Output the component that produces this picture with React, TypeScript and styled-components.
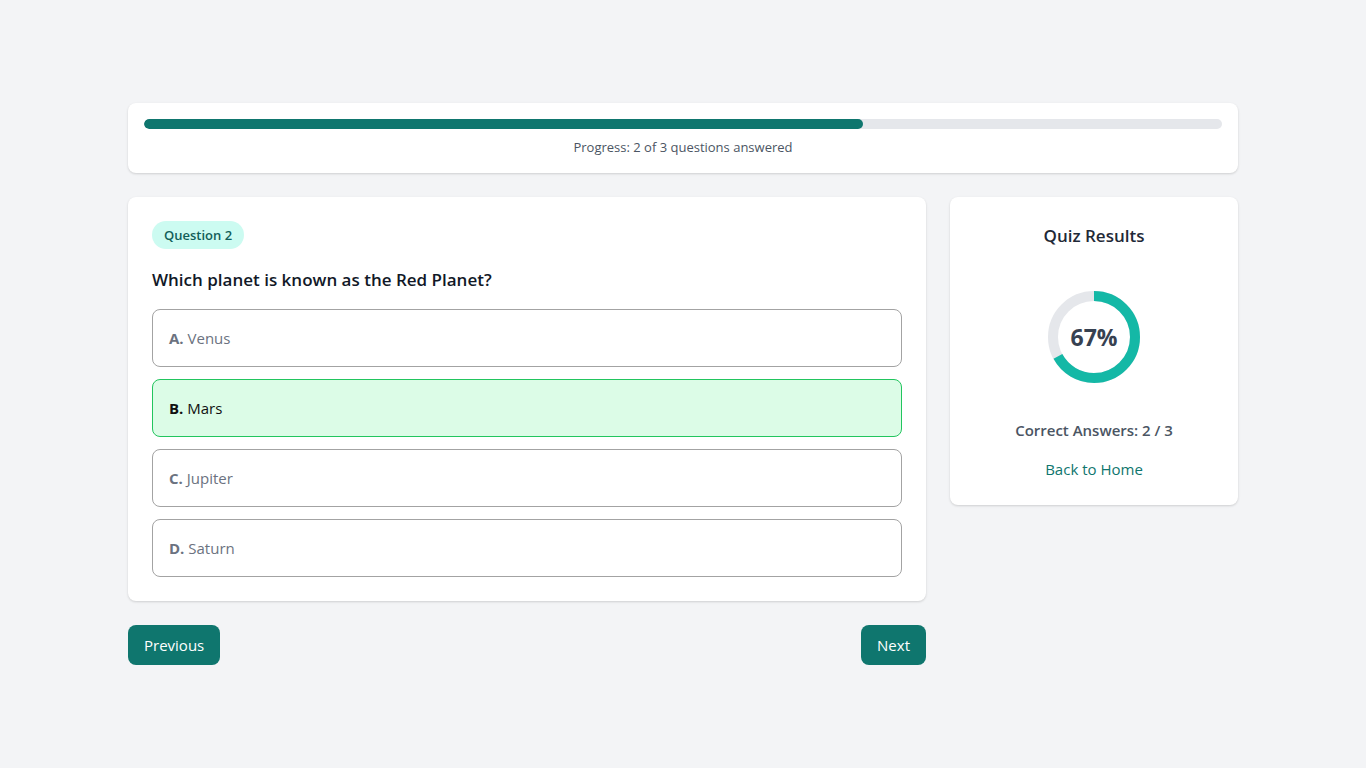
import React from "react";
import styled, { createGlobalStyle } from "styled-components";

const Global = createGlobalStyle`
  * { box-sizing: border-box; }
  html, body { margin: 0; padding: 0; background: #f3f4f6; }
  body { font-family: "Open Sans", "Noto Sans", sans-serif; color: #111827; }
`;

const Page = styled.div`
  min-height: 100vh;
  display: flex;
  align-items: center;
  justify-content: center;
`;

const Wrap = styled.div`
  width: 1110px;
  display: flex;
  flex-direction: column;
  gap: 24px;
`;

const Card = styled.div`
  background: #fff;
  border-radius: 8px;
  box-shadow: 0 1px 3px rgba(0, 0, 0, 0.1), 0 1px 2px rgba(0, 0, 0, 0.06);
`;

const ProgressCard = styled(Card)`
  padding: 16px 16px 17px;
  display: flex;
  flex-direction: column;
  gap: 9px;
`;

const Track = styled.div`
  height: 10px;
  border-radius: 5px;
  background: #e5e7eb;
  overflow: hidden;
`;

const Fill = styled.div`
  height: 100%;
  border-radius: 5px;
  background: #0f766e;
`;

const ProgressText = styled.div`
  text-align: center;
  font-size: 13px;
  line-height: 18px;
  color: #4b5563;
`;

const Row = styled.div`
  display: grid;
  grid-template-columns: 798px 1fr;
  gap: 24px;
  align-items: start;
`;

const Left = styled.div`
  display: flex;
  flex-direction: column;
  gap: 24px;
`;

const QuestionCard = styled(Card)`
  padding: 24px;
  display: flex;
  flex-direction: column;
`;

const Badge = styled.span`
  align-self: flex-start;
  height: 28px;
  padding: 0 12px;
  border-radius: 14px;
  background: #ccfbf1;
  color: #115e59;
  font-size: 13px;
  font-weight: 600;
  display: inline-flex;
  align-items: center;
`;

const QuestionTitle = styled.h2`
  margin: 19px 0 17px;
  font-size: 17px;
  line-height: 24px;
  font-weight: 600;
  color: #111827;
`;

const Options = styled.div`
  display: flex;
  flex-direction: column;
  gap: 12px;
`;

const Option = styled.button<{ $selected?: boolean }>`
  height: 58px;
  width: 100%;
  text-align: left;
  padding: 0 16px;
  border-radius: 8px;
  border: 1px solid ${(p) => (p.$selected ? "#22c55e" : "#a3a3a3")};
  background: ${(p) => (p.$selected ? "#dcfce7" : "#fff")};
  color: ${(p) => (p.$selected ? "#111111" : "#6b7280")};
  font-family: inherit;
  font-size: 15px;
  cursor: pointer;
`;

const Letter = styled.b`
  font-weight: 700;
`;

const Nav = styled.div`
  display: flex;
  justify-content: space-between;
`;

const NavButton = styled.button`
  height: 40px;
  padding: 0 16px;
  border: none;
  border-radius: 8px;
  background: #0f766e;
  color: #fff;
  font-family: inherit;
  font-size: 15px;
  cursor: pointer;
`;

const ResultsCard = styled(Card)`
  padding: 24px 24px 25px;
  display: flex;
  flex-direction: column;
  align-items: center;
`;

const ResultsTitle = styled.h3`
  margin: 2px 0 0;
  font-size: 17px;
  line-height: 26px;
  font-weight: 600;
  color: #1f2937;
`;

const Donut = styled.div`
  position: relative;
  width: 94px;
  height: 94px;
  margin-top: 41px;
`;

const DonutLabel = styled.span`
  position: absolute;
  inset: 0;
  display: flex;
  align-items: center;
  justify-content: center;
  font-size: 23px;
  font-weight: 700;
  color: #374151;
`;

const Correct = styled.div`
  margin-top: 35px;
  font-size: 15px;
  line-height: 22px;
  font-weight: 600;
  color: #4b5563;
`;

const HomeLink = styled.a`
  margin-top: 17px;
  font-size: 15px;
  line-height: 22px;
  color: #0f766e;
  text-decoration: none;
`;

const options = [
  { l: "A.", t: "Venus" },
  { l: "B.", t: "Mars", sel: true },
  { l: "C.", t: "Jupiter" },
  { l: "D.", t: "Saturn" },
];

export default function App() {
  const pct = 2 / 3;
  const r = 41;
  const c = 2 * Math.PI * r;
  return (
    <>
      <Global />
      <Page>
        <Wrap>
          <ProgressCard>
            <Track>
              <Fill style={{ width: `${pct * 100}%` }} />
            </Track>
            <ProgressText>Progress: 2 of 3 questions answered</ProgressText>
          </ProgressCard>
          <Row>
            <Left>
              <QuestionCard>
                <Badge>Question 2</Badge>
                <QuestionTitle>Which planet is known as the Red Planet?</QuestionTitle>
                <Options>
                  {options.map((o) => (
                    <Option key={o.l} $selected={o.sel}>
                      <Letter>{o.l}</Letter> {o.t}
                    </Option>
                  ))}
                </Options>
              </QuestionCard>
              <Nav>
                <NavButton>Previous</NavButton>
                <NavButton>Next</NavButton>
              </Nav>
            </Left>
            <ResultsCard>
              <ResultsTitle>Quiz Results</ResultsTitle>
              <Donut>
                <svg width="94" height="94" viewBox="0 0 94 94">
                  <circle cx="47" cy="47" r={r} fill="none" stroke="#e5e7eb" strokeWidth="10" />
                  <circle
                    cx="47"
                    cy="47"
                    r={r}
                    fill="none"
                    stroke="#14b8a6"
                    strokeWidth="10"
                    strokeDasharray={`${c * 0.67} ${c}`}
                    transform="rotate(-90 47 47)"
                  />
                </svg>
                <DonutLabel>67%</DonutLabel>
              </Donut>
              <Correct>Correct Answers: 2 / 3</Correct>
              <HomeLink href="#">Back to Home</HomeLink>
            </ResultsCard>
          </Row>
        </Wrap>
      </Page>
    </>
  );
}
